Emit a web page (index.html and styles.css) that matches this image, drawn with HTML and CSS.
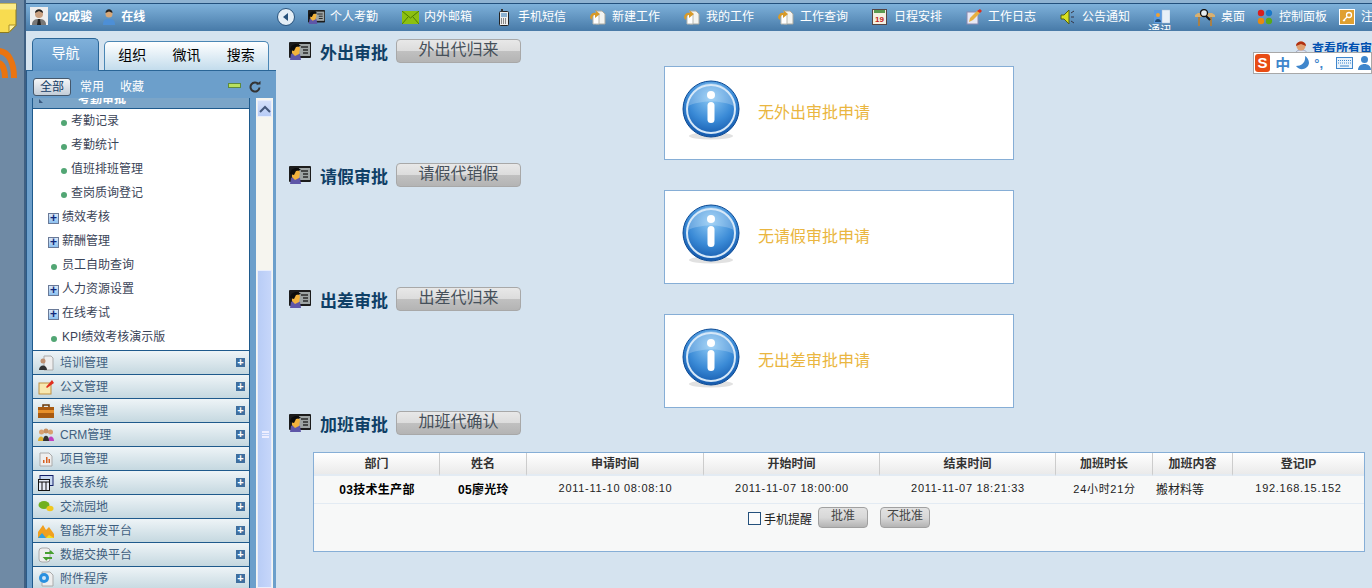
FILE: index.html
```html
<!DOCTYPE html>
<html lang="zh-CN">
<head>
    <meta charset="UTF-8">
    <meta name="viewport" content="width=device-width, initial-scale=1.0">
    <title>审批</title>
    <link rel="stylesheet" href="styles.css">
</head>
<body>
    <svg class="defs" width="0" height="0">
        <defs>
            <radialGradient id="gradInfo" cx="50%" cy="30%" r="75%">
                <stop offset="0" stop-color="#8cc8f4"/>
                <stop offset="0.55" stop-color="#3a8ad6"/>
                <stop offset="1" stop-color="#0c4fa4"/>
            </radialGradient>
            <symbol id="iconCard" viewBox="0 0 22 18">
                <rect x="0" y="0" width="22" height="16" rx="1" fill="#1c1c1c"/>
                <rect x="10" y="2" width="11" height="12" fill="#9ea4a4"/>
                <path d="M12 5h7M14 8h5M14 11h5" stroke="#2a2a2a" stroke-width="1.300"/>
                <path d="M1 18l1-6 4-2 5 2 1 6z" fill="#5e56a8"/>
                <path d="M3 5l5-2 3 3-1 6-4 2-3-3z" fill="#f2b23c"/>
                <path d="M1 8c0-6 8-8 11-4L7 5 5 9z" fill="#0c0c0c"/>
            </symbol>
            <symbol id="iconPaper" viewBox="0 0 16 16">
                <path d="M6 2h6l3 3v10H6z" fill="#f4f4f0" stroke="#a8a8a0"/>
                <path d="M3 5h6v10H3z" fill="#fff" stroke="#b8b8b0"/>
                <path d="M0 9c0-4 3-6 6-5V1l-1 0 5 4-5 4V6C3 6 2 8 2 11z" fill="#d89a28"/>
            </symbol>
            <symbol id="iconInfo" viewBox="0 0 58 62">
                <ellipse cx="29" cy="56" rx="22" ry="3.500" fill="#c4c4c4" opacity="0.500"/>
                <circle cx="29" cy="29" r="28" fill="url(#gradInfo)" stroke="#0c4a94"/>
                <path d="M6 26a23 23 0 0 1 46 0C40 20 18 20 6 26z" fill="#fff" opacity="0.220"/>
                <circle cx="29" cy="29" r="24" fill="none" stroke="#d6e8f8" stroke-width="2"/>
                <circle cx="29" cy="15" r="4" fill="#fff"/>
                <rect x="25.500" y="22" width="7" height="21" rx="3.500" fill="#fff"/>
            </symbol>
        </defs>
    </svg>

    <div class="strip">
        <svg class="strip-note" width="17" height="33" viewBox="0 0 17 33">
            <path d="M-2 3.500h18v22l-7 7H-2z" fill="#f8dc50" stroke="#8c7a20"/>
            <path d="M-2 3.500h18v6H-2z" fill="#fcec88"/>
            <path d="M9 32v-7h7z" fill="#fff2a0" stroke="#a89028"/>
        </svg>
        <svg class="strip-rss" width="18" height="32" viewBox="0 0 18 32">
            <path d="M-2 3C9 3 14 15 14 30" fill="none" stroke="#ea7410" stroke-width="6"/>
            <path d="M-2 15C3 15 5 23 5 30" fill="none" stroke="#ea7410" stroke-width="6"/>
        </svg>
    </div>

    <div class="main">
        <div class="topbar">
            <div class="user-box">
                <svg class="user-photo" width="18" height="18" viewBox="0 0 18 18">
                    <rect width="18" height="18" fill="#eee"/>
                    <path d="M2 18c0-5 3-6 7-6s7 1 7 6z" fill="#777"/>
                    <path d="M8 12h2l1 6H7z" fill="#222"/>
                    <circle cx="9" cy="7" r="4" fill="#c9a080"/>
                    <path d="M5 6c0-5 8-5 8 0l-4-2z" fill="#222"/>
                </svg>
                <span class="user-name">02成骏</span>
                <svg class="user-state" width="14" height="17" viewBox="0 0 14 17">
                    <path d="M1 17c0-5 2-6 6-6s6 1 6 6z" fill="#4d8fd6"/>
                    <circle cx="7" cy="6" r="3.500" fill="#d8a878"/>
                    <path d="M3.500 5c0-5 7-5 7 0l-3.500-1.500z" fill="#222"/>
                </svg>
                <span class="user-name">在线</span>
            </div>
            <svg class="back-btn" width="18" height="18" viewBox="0 0 18 18">
                <circle cx="9" cy="9" r="8.500" fill="#e4eef6" stroke="#27527c"/>
                <path d="M11 5v8L6 9z" fill="#27527c"/>
            </svg>
            <div class="nav">
                <div class="nav-item">
                    <span class="nav-icon"><svg width="17" height="14"><use href="#iconCard"/></svg></span>个人考勤
                </div>
                <div class="nav-item">
                    <span class="nav-icon"><svg width="17" height="13" viewBox="0 0 17 13">
                        <rect width="17" height="13" fill="#8cc010"/>
                        <path d="M0 0l8.500 7L17 0M0 13l6-7M17 13l-6-7" fill="none" stroke="#4c7c00"/>
                    </svg></span>内外邮箱
                </div>
                <div class="nav-item">
                    <span class="nav-icon phone"><svg width="10" height="17" viewBox="0 0 10 17">
                        <rect x="0.500" y="2.500" width="9" height="14" rx="1" fill="#eee" stroke="#222"/>
                        <rect x="2" y="0" width="2" height="3" fill="#333"/>
                        <rect x="2" y="4" width="6" height="4" fill="#8ab0d0"/>
                        <path d="M2 10h6M2 12h6M2 14h6" stroke="#222" stroke-dasharray="1 1"/>
                    </svg></span>手机短信
                </div>
                <div class="nav-item">
                    <span class="nav-icon"><svg width="16" height="16"><use href="#iconPaper"/></svg></span>新建工作
                </div>
                <div class="nav-item">
                    <span class="nav-icon"><svg width="16" height="16"><use href="#iconPaper"/></svg></span>我的工作
                </div>
                <div class="nav-item">
                    <span class="nav-icon"><svg width="16" height="16"><use href="#iconPaper"/></svg></span>工作查询
                </div>
                <div class="nav-item">
                    <span class="nav-icon"><svg width="15" height="16" viewBox="0 0 15 16">
                        <rect x="0.500" y="0.500" width="14" height="15" fill="#f4f0e0" stroke="#544"/>
                        <rect x="2" y="1" width="11" height="3" fill="#5a9a50"/>
                        <text x="7.500" y="13" class="cal-day">19</text>
                    </svg></span>日程安排
                </div>
                <div class="nav-item">
                    <span class="nav-icon"><svg width="16" height="16" viewBox="0 0 16 16">
                        <rect x="1" y="3" width="11" height="12" fill="#e8e8f4" stroke="#8a8ab0"/>
                        <path d="M3 13l1-4 7-7 3-1 0 3-7 7z" fill="#e8b040"/>
                        <path d="M11 2l3-2 2 2-2 2z" fill="#d83020"/>
                    </svg></span>工作日志
                </div>
                <div class="nav-item">
                    <span class="nav-icon"><svg width="15" height="16" viewBox="0 0 15 16">
                        <path d="M1 6h3l5-5v14l-5-5H1z" fill="#d8e020" stroke="#556010"/>
                        <path d="M11 4l3-2M11 8h3M11 12l3 2" stroke="#334" fill="none"/>
                    </svg></span>公告通知
                </div>
                <div class="nav-item nav-stack">
                    <svg width="16" height="15" viewBox="0 0 16 15">
                        <rect x="0" y="1" width="8" height="13" fill="#5a9ae0"/>
                        <rect x="8" y="1" width="8" height="13" fill="#e8f0f8" stroke="#a8c0d8" stroke-width="0.500"/>
                        <circle cx="4" cy="6" r="2" fill="#f0a030"/>
                        <path d="M1 13c0-4 6-4 6 0z" fill="#24507c"/>
                    </svg>
                    <span class="stack-label">通讯</span>
                </div>
                <div class="nav-item nav-desk">
                    <span class="nav-icon desk"><svg width="20" height="17" viewBox="0 0 20 17">
                        <path d="M0 6l3-2h14l3 2v2H0z" fill="#d8b070"/>
                        <path d="M3 8h2v9H3zM15 8h2v9h-2z" fill="#a88048"/>
                        <circle cx="9" cy="4" r="3.500" fill="#e8eef0" stroke="#111" stroke-width="1.300"/>
                        <path d="M11 7l4 4" stroke="#111" stroke-width="2"/>
                    </svg></span>桌面
                </div>
                <div class="nav-item nav-panel">
                    <span class="nav-icon"><svg width="16" height="16" viewBox="0 0 16 16">
                        <circle cx="4" cy="4" r="3.200" fill="#d81e1e"/>
                        <circle cx="12" cy="4" r="3.200" fill="#1a78c8"/>
                        <circle cx="4" cy="12" r="3.200" fill="#e88a10"/>
                        <circle cx="12" cy="12" r="3.200" fill="#58a818"/>
                    </svg></span>控制面板
                </div>
                <div class="nav-item nav-last">
                    <span class="nav-icon"><svg width="16" height="16" viewBox="0 0 16 16">
                        <rect x="0.500" y="0.500" width="15" height="15" fill="#e0a030" stroke="#fff"/>
                        <circle cx="10" cy="6" r="2.500" fill="none" stroke="#fff" stroke-width="1.300"/>
                        <path d="M8 8l-4 4M5 11l1 1" stroke="#fff" stroke-width="1.300"/>
                    </svg></span>注销
                </div>
            </div>
        </div>

        <div class="body-row">
            <div class="sidebar">
                <div class="tabs">
                    <div class="tab tab-active">导航</div>
                    <div class="tab-group">
                        <span class="tab">组织</span>
                        <span class="tab">微讯</span>
                        <span class="tab">搜索</span>
                    </div>
                </div>
                <div class="panel">
                    <div class="filter">
                        <span class="filter-on">全部</span>
                        <span class="filter-link">常用</span>
                        <span class="filter-link">收藏</span>
                        <span class="filter-minus"></span>
                        <svg class="filter-refresh" width="12" height="12" viewBox="0 0 12 12">
                            <path d="M9.500 3.200A4.500 4.500 0 1 0 10.500 6.500" fill="none" stroke="#333" stroke-width="2"/>
                            <path d="M7 3.500h4.500V0z" fill="#333"/>
                        </svg>
                    </div>
                    <div class="panel-row">
                        <div class="tree">
                            <div class="tree-clip"><span>考勤审批</span></div>
                            <div class="tree-list">
                                <div class="leaf leaf-deep">考勤记录</div>
                                <div class="leaf leaf-deep">考勤统计</div>
                                <div class="leaf leaf-deep">值班排班管理</div>
                                <div class="leaf leaf-deep">查岗质询登记</div>
                                <div class="leaf leaf-fold">绩效考核</div>
                                <div class="leaf leaf-fold">薪酬管理</div>
                                <div class="leaf">员工自助查询</div>
                                <div class="leaf leaf-fold">人力资源设置</div>
                                <div class="leaf leaf-fold">在线考试</div>
                                <div class="leaf">KPI绩效考核演示版</div>
                            </div>
                            <div class="group">
                                <svg width="16" height="16" viewBox="0 0 16 16">
                                    <path d="M6 1h7l2 2v12H6z" fill="#eee" stroke="#aaa"/>
                                    <circle cx="5" cy="6" r="2.500" fill="#c09070"/>
                                    <path d="M1 15c0-6 8-6 8 0z" fill="#333"/>
                                </svg>培训管理
                            </div>
                            <div class="group">
                                <svg width="16" height="16" viewBox="0 0 16 16">
                                    <rect x="1" y="4" width="12" height="11" fill="#f8e8b0" stroke="#c09040"/>
                                    <path d="M8 8l6-7 2 3-7 5z" fill="#e03020"/>
                                </svg>公文管理
                            </div>
                            <div class="group">
                                <svg width="16" height="16" viewBox="0 0 16 16">
                                    <path d="M0 4h16v11H0z" fill="#a85a10"/>
                                    <path d="M0 7h16v3H0z" fill="#e8902a"/>
                                    <path d="M5 4V2h6v2" fill="none" stroke="#683808" stroke-width="1.500"/>
                                </svg>档案管理
                            </div>
                            <div class="group">
                                <svg width="16" height="16" viewBox="0 0 16 16">
                                    <circle cx="3.500" cy="5" r="2.500" fill="#d8a070"/>
                                    <circle cx="12.500" cy="5" r="2.500" fill="#d8a070"/>
                                    <circle cx="8" cy="4" r="2.500" fill="#c89060"/>
                                    <path d="M0 14c0-6 6-6 6 0z" fill="#e0b030"/>
                                    <path d="M10 14c0-6 6-6 6 0z" fill="#c040c0"/>
                                    <path d="M5 14c0-7 6-7 6 0z" fill="#333"/>
                                </svg>CRM管理
                            </div>
                            <div class="group">
                                <svg width="16" height="16" viewBox="0 0 16 16">
                                    <path d="M2 2h9l3 3v10H2z" fill="#eee" stroke="#aaa"/>
                                    <path d="M5 12V9h1.500v3zM8 12V6h1.500v6zM10.500 12V8H12v4z" fill="#d86020"/>
                                </svg>项目管理
                            </div>
                            <div class="group">
                                <svg width="16" height="16" viewBox="0 0 16 16">
                                    <rect x="2" y="0.500" width="13" height="10" fill="#c8d8f0" stroke="#14206a"/>
                                    <rect x="0.500" y="4.500" width="11" height="11" fill="#e8eef8" stroke="#111"/>
                                    <path d="M0 7h12M4 7v8M8 7v8" stroke="#111"/>
                                </svg>报表系统
                            </div>
                            <div class="group">
                                <svg width="16" height="16" viewBox="0 0 16 16">
                                    <ellipse cx="6" cy="6" rx="5.500" ry="4" fill="#70b020"/>
                                    <ellipse cx="12" cy="9.500" rx="3.500" ry="2.800" fill="#f0c820"/>
                                </svg>交流园地
                            </div>
                            <div class="group">
                                <svg width="16" height="16" viewBox="0 0 16 16">
                                    <path d="M0 15V9l5-7 3 5 3-3 5 7v4z" fill="#f0a020"/>
                                    <path d="M0 15l4-5 4 5z" fill="#30a0e0"/>
                                    <path d="M8 15l3-3 5 3z" fill="#f0e020"/>
                                </svg>智能开发平台
                            </div>
                            <div class="group">
                                <svg width="16" height="16" viewBox="0 0 16 16">
                                    <rect x="1" y="1" width="11" height="14" rx="3" fill="#eee" stroke="#aaa"/>
                                    <path d="M7 6h7l-2-2M14 11H7l2 2" fill="none" stroke="#48a030" stroke-width="2"/>
                                </svg>数据交换平台
                            </div>
                            <div class="group">
                                <svg width="16" height="16" viewBox="0 0 16 16">
                                    <path d="M4 1h8l3 3v11H4z" fill="#eee" stroke="#aaa"/>
                                    <circle cx="6" cy="7" r="5" fill="#2a90e0"/>
                                    <circle cx="6" cy="7" r="2" fill="#cfe6f8"/>
                                </svg>附件程序
                            </div>
                        </div>
                        <div class="scroll">
                            <div class="scroll-up"><svg width="12" height="8" viewBox="0 0 12 8"><path d="M1 7l5-5 5 5" fill="none" stroke="#44587c" stroke-width="2"/></svg></div>
                            <div class="scroll-thumb"><span class="grip"></span></div>
                        </div>
                    </div>
                </div>
            </div>

            <div class="content">
                <div class="float-link">
                    <svg width="17" height="15" viewBox="0 0 17 15">
                        <path d="M2 15c0-5 3-6 6-6s7 1 7 6z" fill="#e0e4f0" stroke="#a0a8c0"/>
                        <circle cx="8" cy="5" r="4.500" fill="#e0a070"/>
                        <path d="M3 5c0-6 10-6 10 0L8 3z" fill="#b03010"/>
                    </svg>
                    <span>查看所有审批</span>
                </div>
                <div class="ime">
                    <span class="ime-logo">S</span>
                    <span class="ime-cn">中</span>
                    <svg width="14" height="14" viewBox="0 0 14 14"><path d="M10 0c1 6-3 10-9 10 3 5 12 4 13-3 0-3-2-6-4-7z" fill="#3f86cc"/></svg>
                    <span class="ime-dot">°,</span>
                    <svg width="17" height="12" viewBox="0 0 17 12">
                        <rect x="0.500" y="0.500" width="16" height="11" fill="#e8f2fb" stroke="#3f86cc"/>
                        <path d="M2 3.500h13M2 6h13" stroke="#3f86cc" stroke-dasharray="1 1"/>
                        <path d="M4 9h9" stroke="#3f86cc"/>
                    </svg>
                    <svg width="13" height="14" viewBox="0 0 13 14"><circle cx="6.500" cy="3.500" r="3.500" fill="#3f86cc"/><path d="M0 14c0-8 13-8 13 0z" fill="#3f86cc"/></svg>
                </div>

                <div class="section">
                    <div class="section-head">
                        <svg width="22" height="18"><use href="#iconCard"/></svg>
                        <span class="section-title">外出审批</span>
                        <span class="big-btn">外出代归来</span>
                    </div>
                    <div class="msg-box">
                        <svg class="msg-icon" width="58" height="62"><use href="#iconInfo"/></svg>
                        <span class="msg-text">无外出审批申请</span>
                    </div>
                </div>

                <div class="section">
                    <div class="section-head">
                        <svg width="22" height="18"><use href="#iconCard"/></svg>
                        <span class="section-title">请假审批</span>
                        <span class="big-btn">请假代销假</span>
                    </div>
                    <div class="msg-box">
                        <svg class="msg-icon" width="58" height="62"><use href="#iconInfo"/></svg>
                        <span class="msg-text">无请假审批申请</span>
                    </div>
                </div>

                <div class="section">
                    <div class="section-head">
                        <svg width="22" height="18"><use href="#iconCard"/></svg>
                        <span class="section-title">出差审批</span>
                        <span class="big-btn">出差代归来</span>
                    </div>
                    <div class="msg-box">
                        <svg class="msg-icon" width="58" height="62"><use href="#iconInfo"/></svg>
                        <span class="msg-text">无出差审批申请</span>
                    </div>
                </div>

                <div class="section">
                    <div class="section-head">
                        <svg width="22" height="18"><use href="#iconCard"/></svg>
                        <span class="section-title">加班审批</span>
                        <span class="big-btn">加班代确认</span>
                    </div>
                    <table class="list">
                        <colgroup>
                            <col class="c-dept"><col class="c-name"><col class="c-time"><col class="c-time2"><col class="c-time2"><col class="c-len"><col class="c-what"><col class="c-ip">
                        </colgroup>
                        <thead>
                            <tr>
                                <th>部门</th><th>姓名</th><th>申请时间</th><th>开始时间</th><th>结束时间</th><th>加班时长</th><th>加班内容</th><th>登记IP</th>
                            </tr>
                        </thead>
                        <tbody>
                            <tr class="row">
                                <td class="strong">03技术生产部</td>
                                <td class="strong">05廖光玲</td>
                                <td>2011-11-10 08:08:10</td>
                                <td>2011-11-07 18:00:00</td>
                                <td>2011-11-07 18:21:33</td>
                                <td>24小时21分</td>
                                <td class="left">搬材料等</td>
                                <td>192.168.15.152</td>
                            </tr>
                            <tr>
                                <td colspan="8" class="actions">
                                    <div class="action-row">
                                        <span class="check"></span>
                                        <span class="check-label">手机提醒</span>
                                        <span class="small-btn">批准</span>
                                        <span class="small-btn">不批准</span>
                                    </div>
                                </td>
                            </tr>
                        </tbody>
                    </table>
                </div>
            </div>
        </div>
    </div>
</body>
</html>
```

FILE: styles.css
```css
html, body {
    height: 100%;
}
body {
    display: flex;
    margin: 0;
    overflow: hidden;
    background-color: #d5e3ef;
    font-family: "Liberation Sans", "Noto Sans CJK SC", sans-serif;
    font-size: 12px;
}
.defs {
    position: absolute;
}
svg {
    flex-shrink: 0;
}
.cal-day {
    font-family: "Liberation Sans", sans-serif;
    font-size: 8px;
    font-weight: bold;
    fill: #c02020;
    text-anchor: middle;
}

/* left strip */
.strip {
    width: 24px;
    flex-shrink: 0;
    background-color: #6f8aa5;
    border-right: 2px solid #3e5f82;
}
.strip-note {
    display: block;
}
.strip-rss {
    display: block;
    margin-top: 15px;
}
.main {
    flex: 1;
    min-width: 0;
    display: flex;
    flex-direction: column;
}

/* top bar */
.topbar {
    height: 28px;
    flex-shrink: 0;
    display: flex;
    align-items: center;
    border-top: 3px solid #8fb3d2;
    background: linear-gradient(#80b3dc, #477aa8);
    box-shadow: inset 0 1px 0 #23507c;
    color: #fff;
    white-space: nowrap;
    overflow: hidden;
}
.user-box {
    width: 251px;
    flex-shrink: 0;
    display: flex;
    align-items: center;
    padding: 0 0 2px 4px;
    box-sizing: border-box;
}
.user-name {
    font-weight: bold;
    margin-top: -2px;
}
.user-photo {
    margin-right: 7px;
}
.user-state {
    margin: 0 5px 0 10px;
}
.back-btn {
    margin-right: 13px;
}
.nav {
    display: flex;
    align-items: center;
    height: 100%;
}
.nav-item {
    width: 94px;
    flex-shrink: 0;
    display: flex;
    align-items: center;
    padding-bottom: 3px;
    box-sizing: border-box;
}
.nav-icon {
    width: 22px;
    flex-shrink: 0;
    display: flex;
    align-items: center;
    margin-bottom: -3px;
}
.nav-icon.phone {
    padding-left: 3px;
    width: 19px;
}
.nav-icon.desk {
    width: 26px;
}
.nav-stack {
    width: 41px;
    flex-direction: column;
    align-items: flex-start;
    height: 100%;
    padding: 6px 0 0;
}
.stack-label {
    margin-left: -6px;
    line-height: 14px;
}
.nav-desk {
    width: 62px;
}
.nav-panel {
    width: 82px;
}
.nav-last {
    width: 60px;
}

/* sidebar */
.body-row {
    flex: 1;
    min-height: 0;
    display: flex;
}
.sidebar {
    width: 250px;
    flex-shrink: 0;
    display: flex;
    flex-direction: column;
    min-height: 0;
}
.tabs {
    height: 39px;
    flex-shrink: 0;
    display: flex;
    align-items: flex-end;
    padding-left: 6px;
    gap: 5px;
    position: relative;
}
.tab-active {
    width: 67px;
    height: 33px;
    box-sizing: border-box;
    margin-bottom: -1px;
    position: relative;
    border: 1px solid #2a6596;
    border-bottom: none;
    border-radius: 5px 5px 0 0;
    background: linear-gradient(#7fb0da, #5f95c6);
    color: #fff;
    font-size: 14px;
    line-height: 28px;
    text-align: center;
}
.tab-group {
    width: 165px;
    height: 29px;
    box-sizing: border-box;
    display: flex;
    border: 1px solid #4a86b4;
    border-bottom: none;
    border-radius: 5px 5px 0 0;
    background: linear-gradient(#ffffff, #c3dcec);
    color: #000;
    font-size: 14px;
}
.tab-group .tab {
    width: 55px;
    line-height: 27px;
    text-align: center;
}
.panel {
    flex: 1;
    min-height: 0;
    display: flex;
    flex-direction: column;
    border-top: 1px solid #2a6596;
    border-left: 1px solid #2a5a88;
    background-color: #6c9fcb;
}
.filter {
    height: 27px;
    flex-shrink: 0;
    display: flex;
    align-items: center;
    padding-left: 6px;
    color: #fff;
}
.filter-on {
    width: 38px;
    height: 18px;
    box-sizing: border-box;
    margin-top: 4px;
    border: 1px solid #45586c;
    border-radius: 3px;
    background: linear-gradient(#f4f6f8, #c3cdd8);
    color: #123c66;
    line-height: 16px;
    text-align: center;
}
.filter-link {
    margin: 1px 16px 0 9px;
}
.filter-link + .filter-link {
    margin-left: 0;
}
.filter-minus {
    width: 13px;
    height: 5px;
    box-sizing: border-box;
    margin: 2px 0 0 68px;
    border: 1px solid #5e8a3c;
    background-color: #b8e060;
}
.filter-refresh {
    margin: 5px 0 0 8px;
}
.panel-row {
    flex: 1;
    min-height: 0;
    display: flex;
    overflow: hidden;
}
.tree {
    width: 218px;
    margin-left: 5px;
    flex-shrink: 0;
    box-sizing: border-box;
    border-left: 1px solid #1f5a8c;
    border-right: 1px solid #1f5a8c;
    color: #3b4458;
}
.tree-clip {
    height: 11px;
    box-sizing: border-box;
    position: relative;
    overflow: hidden;
    border-bottom: 1px solid #1f5a8c;
    background-color: #7ba5c8;
    color: #fff;
    font-weight: bold;
    padding-left: 45px;
    line-height: 2px;
}
.tree-clip::before {
    content: "";
    position: absolute;
    left: 6px;
    top: 1px;
    border-bottom: 4px solid #3a5a80;
    border-right: 4px solid transparent;
}
.tree-list {
    background-color: #fff;
    padding-bottom: 1px;
}
.leaf {
    height: 24px;
    box-sizing: border-box;
    display: flex;
    align-items: center;
    padding: 0 0 3px 29px;
    position: relative;
}
.leaf::before {
    content: "";
    position: absolute;
    left: 18px;
    top: 11px;
    width: 6px;
    height: 6px;
    border-radius: 50%;
    background-color: #52a674;
}
.leaf-deep {
    padding-left: 38px;
}
.leaf-deep::before {
    left: 28px;
}
.leaf-fold::before {
    left: 15px;
    top: 8px;
    width: 9px;
    height: 9px;
    border: 1px solid #6a7a98;
    border-radius: 0;
    background: linear-gradient(#dce8f8, #8cc0f0);
}
.leaf-fold::after {
    content: "+";
    position: absolute;
    left: 15px;
    top: 8px;
    width: 11px;
    height: 11px;
    color: #10287c;
    font-weight: bold;
    font-size: 12px;
    line-height: 11px;
    text-align: center;
}
.group {
    height: 24px;
    box-sizing: border-box;
    display: flex;
    align-items: center;
    gap: 6px;
    padding: 0 0 2px 5px;
    position: relative;
    border-top: 1px solid #1f5a8c;
    background: linear-gradient(#eef4f7, #c5d8e0);
    color: #3f5f7f;
}
.group svg {
    margin-bottom: -2px;
}
.group::after {
    content: "+";
    position: absolute;
    right: 4px;
    top: 7px;
    width: 9px;
    height: 9px;
    background-color: #3f6f9f;
    color: #fff;
    font-weight: bold;
    font-size: 11px;
    line-height: 9px;
    text-align: center;
}

/* scroll bar */
.scroll {
    width: 17px;
    margin-left: 6px;
    flex-shrink: 0;
    background-color: #f6f5ef;
    display: flex;
    flex-direction: column;
}
.scroll-up {
    height: 17px;
    margin: 2px 1px 0;
    box-sizing: border-box;
    border: 1px solid #e8eefc;
    background: linear-gradient(#d4e0fa, #b8ccf6);
    display: flex;
    align-items: center;
    justify-content: center;
}
.scroll-thumb {
    flex: 1;
    margin: 153px 1px 0;
    border: 1px solid #e8eefc;
    background: linear-gradient(90deg, #b8ccf6, #c6d6fa);
    position: relative;
}
.grip {
    position: absolute;
    left: 4px;
    top: 160px;
    width: 7px;
    height: 7px;
    border-top: 1px solid #eef;
    border-bottom: 1px solid #eef;
    background: repeating-linear-gradient(#eef 0 1px, transparent 1px 2px);
    box-sizing: border-box;
}

/* content */
.content {
    flex: 1;
    min-width: 0;
    position: relative;
    padding: 8px 0 0 13px;
    border-top: 1px solid #4a7ba8;
    margin-top: -1px;
}
.section {
    height: 124px;
}
.section-head {
    height: 24px;
    display: flex;
    align-items: center;
}
.section-title {
    margin: 0 8px 0 9px;
    color: #0f3f66;
    font-size: 17px;
    font-weight: bold;
}
.big-btn {
    width: 125px;
    height: 24px;
    box-sizing: border-box;
    border: 1px solid #a8a8a8;
    border-radius: 4px;
    background: linear-gradient(#e8e8e8 0, #dcdcdc 50%, #c0c0c0 52%, #b4b4b4 100%);
    color: #46505a;
    font-size: 16px;
    line-height: 20px;
    text-align: center;
}
.msg-box {
    width: 350px;
    height: 94px;
    box-sizing: border-box;
    margin: 3px 0 0 375px;
    display: flex;
    align-items: center;
    padding-left: 17px;
    border: 1px solid #86aed6;
    background-color: #fff;
}
.msg-icon {
    margin-bottom: 4px;
}
.msg-text {
    margin: 0 0 4px 18px;
    color: #eab640;
    font-size: 16px;
}

/* table */
.list {
    width: 1052px;
    height: 100px;
    margin: 17px 0 0 24px;
    table-layout: fixed;
    border-collapse: separate;
    border-spacing: 0;
    border: 1px solid #86aed6;
    background-color: #f7f8f8;
    color: #222;
}
.c-dept { width: 126px; }
.c-name { width: 87px; }
.c-time { width: 177px; }
.c-time2 { width: 176px; }
.c-len { width: 97px; }
.c-what { width: 80px; }
.c-ip { width: 131px; }
.list th {
    height: 19px;
    padding: 0 0 2px;
    border-right: 1px solid #ccc;
    border-bottom: 2px solid #e3ebf3;
    background: linear-gradient(#ffffff, #eaeaea);
    color: #333;
    font-size: 12px;
}
.list th:last-child {
    border-right: none;
}
.list td {
    padding: 0;
    text-align: center;
    font-size: 11px;
    letter-spacing: 0.7px;
}
.row td {
    height: 24px;
    padding-bottom: 3px;
    border-bottom: 1px solid #e3ebf3;
}
.list .strong {
    font-weight: bold;
    font-size: 12px;
    letter-spacing: 0.3px;
    color: #000;
}
.list .left {
    padding-left: 3px;
    text-align: left;
    font-size: 12px;
    letter-spacing: 0;
}
.list .actions {
    vertical-align: top;
    letter-spacing: 0;
}
.action-row {
    display: flex;
    justify-content: center;
    align-items: flex-start;
    padding-top: 3px;
}
.check {
    width: 13px;
    height: 13px;
    box-sizing: border-box;
    margin-top: 5px;
    border: 1px solid #24507c;
    background-color: #fbfbfb;
}
.check-label {
    margin: 6px 6px 0 3px;
    font-size: 12px;
    line-height: 14px;
}
.small-btn {
    width: 50px;
    height: 21px;
    box-sizing: border-box;
    margin-right: 12px;
    border: 1px solid #a0a0a0;
    border-radius: 4px;
    background: linear-gradient(#e2e2e2 0, #d8d8d8 50%, #b4b4b4 100%);
    color: #444;
    font-size: 12px;
    line-height: 17px;
    text-align: center;
}
.small-btn:last-child {
    margin-right: 0;
}

/* things sitting over the page */
.float-link {
    position: absolute;
    top: 10px;
    left: 1017px;
    display: flex;
    align-items: flex-start;
    gap: 2px;
    white-space: nowrap;
    color: #0050b0;
    font-weight: bold;
}
.float-link span {
    margin-top: -2px;
}
.ime {
    position: absolute;
    top: 21px;
    left: 977px;
    width: 119px;
    height: 22px;
    box-sizing: border-box;
    display: flex;
    align-items: center;
    gap: 5px;
    padding-left: 1px;
    border: 1px solid #a8a8a8;
    background-color: #fff;
    color: #3f86cc;
    overflow: hidden;
}
.ime-logo {
    width: 18px;
    height: 18px;
    border-radius: 3px;
    background-color: #e84c14;
    color: #fff;
    font-weight: bold;
    font-size: 15px;
    line-height: 18px;
    text-align: center;
}
.ime-cn {
    font-size: 15px;
    font-weight: bold;
}
.ime-dot {
    width: 14px;
    margin-right: 5px;
    font-size: 13px;
    font-weight: bold;
}
```
